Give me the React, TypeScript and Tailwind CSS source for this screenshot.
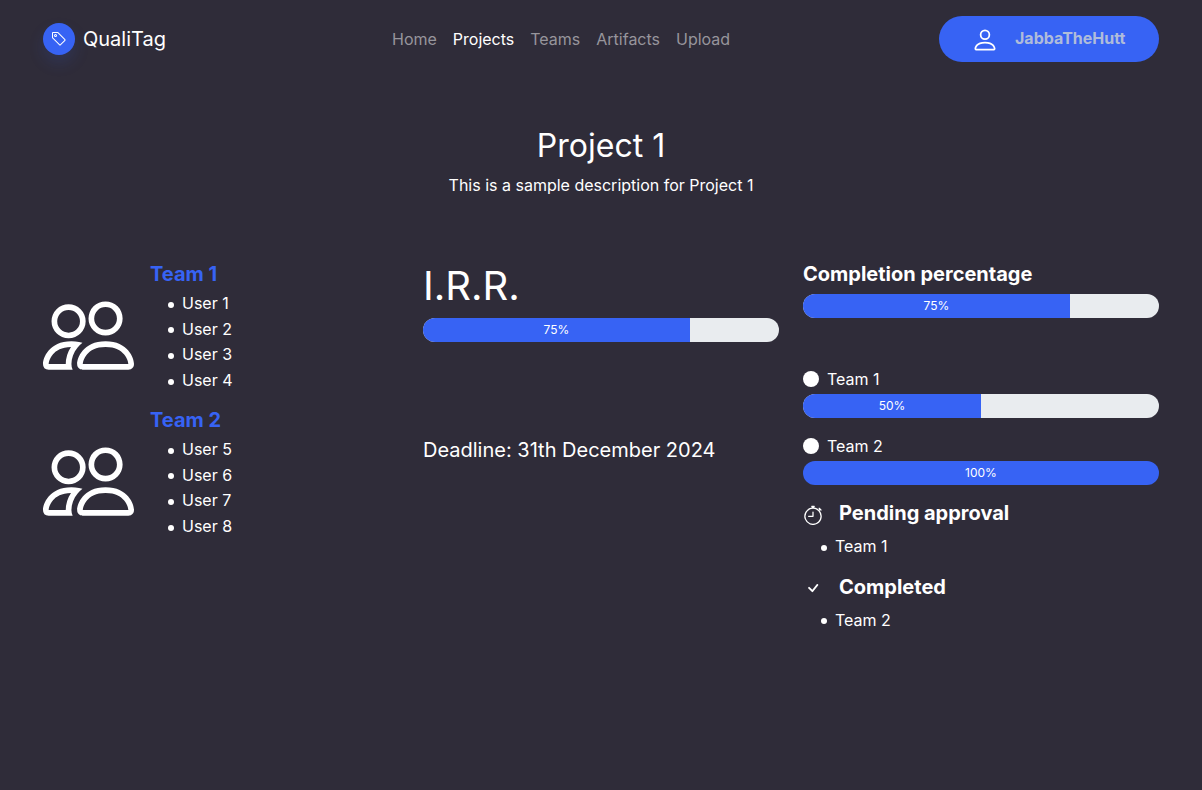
import { BsCheck, BsPeople, BsPerson, BsStopwatch, BsTag } from "react-icons/bs";

const links = ["Home", "Projects", "Teams", "Artifacts", "Upload"];

const teams = [
  { name: "Team 1", users: ["User 1", "User 2", "User 3", "User 4"] },
  { name: "Team 2", users: ["User 5", "User 6", "User 7", "User 8"] },
];

function Progress({ value }: { value: number }) {
  return (
    <div className="flex h-6 w-full overflow-hidden rounded-[12px] bg-[#e9ecef]">
      <div
        className="flex items-center justify-center bg-[#3763f4] text-[12px] leading-[18px]"
        style={{ width: `${value}%` }}
      >
        {value}%
      </div>
    </div>
  );
}

function TeamLabel({ name }: { name: string }) {
  return (
    <div className="flex h-[27px] items-center gap-2 pb-0.5">
      <span className="mb-0.5 size-4 rounded-full bg-white" />
      <span>{name}</span>
    </div>
  );
}

function BulletList({ items }: { items: string[] }) {
  return (
    <ul className="pl-[18px]">
      {items.map((item) => (
        <li key={item} className="flex items-center gap-2">
          <span className="mt-[2px] size-1.5 rounded-full bg-white" />
          <span>{item}</span>
        </li>
      ))}
    </ul>
  );
}

export default function App() {
  return (
    <div className="min-h-[790px] w-full bg-[#2f2c39] font-['Inter',sans-serif] text-[16px] leading-[25.6px] text-white">
      <header className="grid h-[78px] grid-cols-[349px_1fr_220px] items-center px-[43px]">
        <div className="flex items-center gap-2">
          <span className="flex size-8 items-center justify-center rounded-full bg-[#3763f4] shadow-[0_8px_16px_rgba(55,99,244,0.15)]">
            <BsTag className="size-4" />
          </span>
          <span className="text-[20px] leading-8">QualiTag</span>
        </div>
        <nav className="flex gap-4 pt-0.5">
          {links.map((link) => (
            <a key={link} className={link === "Projects" ? "text-white" : "text-[#97959c]"}>
              {link}
            </a>
          ))}
        </nav>
        <button className="flex h-[46px] w-[220px] items-center rounded-full bg-[#3763f4] pl-8 font-bold text-[#afbcda]">
          <BsPerson className="mt-[2px] size-7 text-white" />
          <span className="ml-4">JabbaTheHutt</span>
        </button>
      </header>

      <section className="pt-[49px] text-center">
        <h1 className="text-[32px] leading-[38.4px]">Project 1</h1>
        <p className="mt-2">This is a sample description for Project 1</p>
      </section>

      <main className="mt-[63px] grid grid-cols-3 gap-6 px-[43px]">
        <section>
          {teams.map((team) => (
            <div key={team.name} className="flex h-[146px] items-center">
              <BsPeople className="size-[91px]" />
              <div className="ml-4 h-full">
                <h2 className="mb-[5px] text-[20px] leading-6 font-bold text-[#3763f4]">{team.name}</h2>
                <BulletList items={team.users} />
              </div>
            </div>
          ))}
        </section>

        <section>
          <h2 className="mb-2 text-[40px] leading-12">I.R.R.</h2>
          <Progress value={75} />
          <p className="mt-[92px] text-[20px] leading-8">Deadline: 31th December 2024</p>
        </section>

        <section>
          <h2 className="mb-2 text-[20px] leading-6 font-bold">Completion percentage</h2>
          <Progress value={75} />
          <div className="mt-[49px]">
            <TeamLabel name="Team 1" />
            <Progress value={50} />
          </div>
          <div className="mt-4">
            <TeamLabel name="Team 2" />
            <Progress value={100} />
          </div>
          <div className="mt-4 flex h-6 items-center gap-4">
            <BsStopwatch className="mt-1 size-5" />
            <h3 className="text-[20px] leading-6 font-bold">Pending approval</h3>
          </div>
          <div className="mt-[9px] mb-[15px]">
            <BulletList items={["Team 1"]} />
          </div>
          <div className="flex h-6 items-center gap-4">
            <BsCheck className="mt-0.5 size-5" />
            <h3 className="text-[20px] leading-6 font-bold">Completed</h3>
          </div>
          <div className="mt-[9px]">
            <BulletList items={["Team 2"]} />
          </div>
        </section>
      </main>
    </div>
  );
}
